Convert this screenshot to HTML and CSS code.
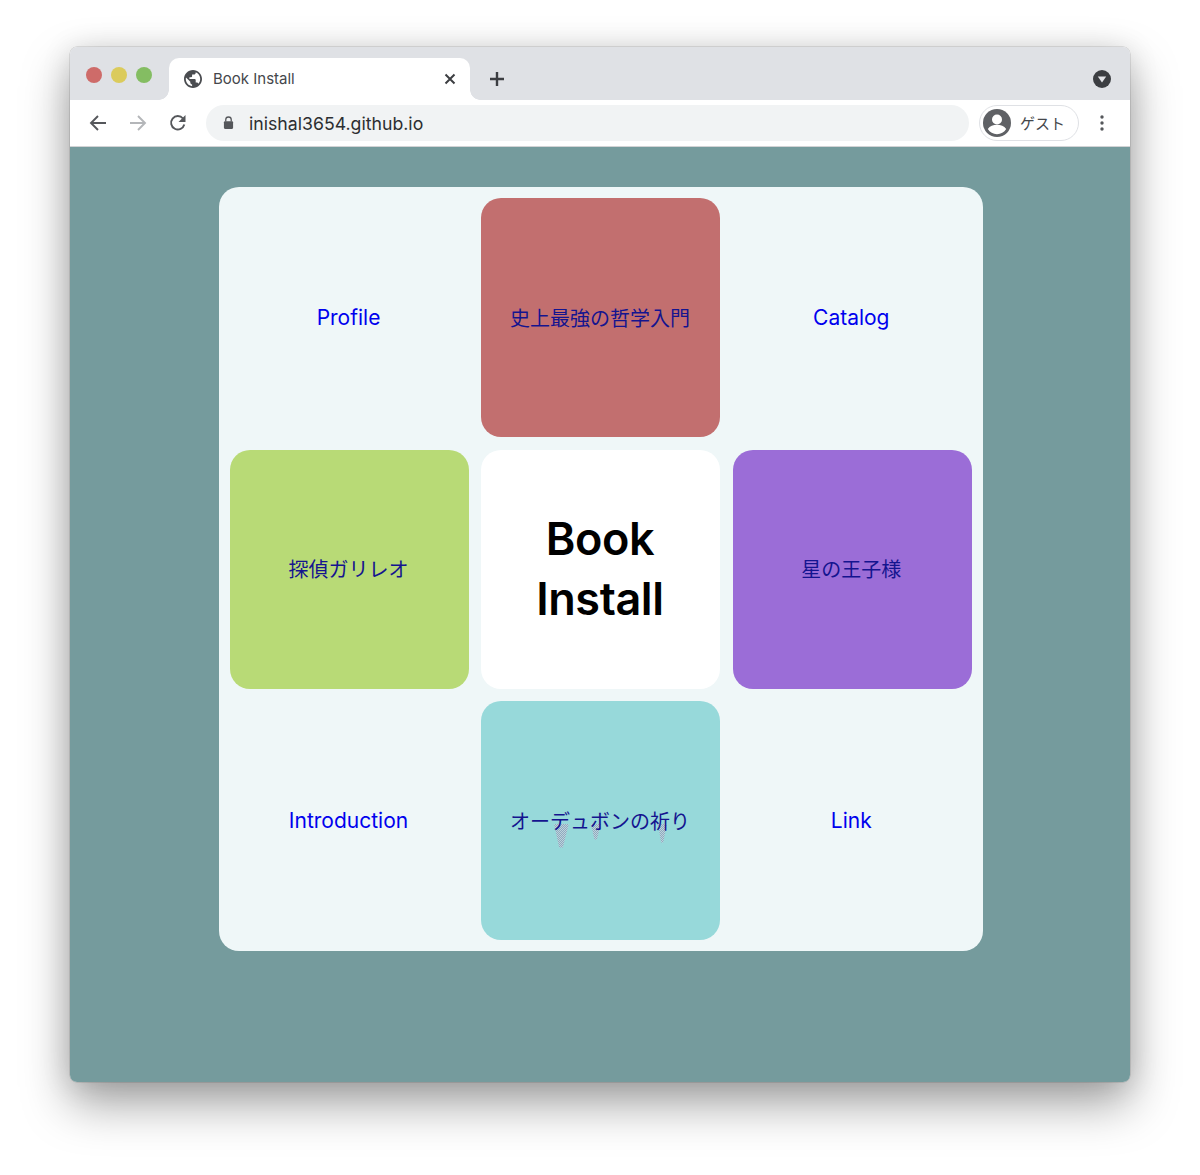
FILE: index.html
```html
<!DOCTYPE html>
<html lang="ja">
<head>
<meta charset="utf-8">
<title>Book Install</title>
<link rel="stylesheet" href="styles.css">
</head>
<body>
<div class="window">
  <div class="titlebar">
    <div class="lights">
      <span class="light red"></span><span class="light yellow"></span><span class="light green"></span>
    </div>
    <div class="tab">
      <svg class="globe" viewBox="2 2 20 20" width="18" height="18"><path fill-rule="evenodd" d="M12 2C6.480 2 2 6.480 2 12s4.480 10 10 10 10-4.480 10-10S17.520 2 12 2zm-1 17.930c-3.950-.490-7-3.850-7-7.930 0-.620.080-1.210.210-1.790L9 15v1c0 1.100.9 2 2 2v1.930zm6.900-2.540c-.260-.810-1-1.390-1.900-1.390h-1v-3c0-.550-.450-1-1-1H8v-2h2c.550 0 1-.450 1-1V7h2c1.100 0 2-.9 2-2v-.410c2.930 1.190 5 4.060 5 7.410 0 2.080-.8 3.970-2.100 5.390z" fill="#4a4c50"/></svg>
      <span class="tab-title">Book Install</span>
      <svg class="tab-close" viewBox="0 0 12 12" width="12" height="12"><path d="M1.500 1.500l9 9M10.500 1.500l-9 9" stroke="#3c3e42" stroke-width="2" fill="none"/></svg>
    </div>
    <svg class="newtab" viewBox="0 0 16 16" width="16" height="16"><path d="M8 1v14M1 8h14" stroke="#3c3e42" stroke-width="2.400" fill="none"/></svg>
    <svg class="menu-down" viewBox="0 0 18 18" width="18" height="18"><circle cx="9" cy="9" r="9" fill="#3c3e42"/><path d="M4.800 6.500h8.400L9 12.500z" fill="#e3e4e8"/></svg>
  </div>
  <div class="toolbar">
    <svg class="nav" viewBox="0 0 18 18" width="18" height="18"><path d="M17 9H2M9 2L2 9l7 7" stroke="#55575b" stroke-width="1.900" fill="none"/></svg>
    <svg class="nav" viewBox="0 0 18 18" width="18" height="18"><path d="M1 9h15M9 2l7 7-7 7" stroke="#b4b6b9" stroke-width="1.900" fill="none"/></svg>
    <svg class="nav" viewBox="0 0 18 18" width="18" height="18"><path d="M15.300 10.500A6.700 6.700 0 1 1 14 4.500" stroke="#55575b" stroke-width="1.900" fill="none"/><path d="M16.500 1v7h-7z" fill="#55575b"/></svg>
    <div class="omnibox">
      <svg class="lock" viewBox="0 0 12 14" width="11" height="13"><path d="M3 6V4a3 3 0 0 1 6 0v2" stroke="#55575b" stroke-width="1.400" fill="none"/><rect x="1" y="5.500" width="10" height="8.500" rx="1.200" fill="#55575b"/></svg>
      <span class="url">inishal3654.github.io</span>
    </div>
    <div class="profile">
      <svg viewBox="0 0 28 28" width="28" height="28"><circle cx="14" cy="14" r="14" fill="#5f6165"/><circle cx="14" cy="10.500" r="5" fill="#fff"/><path d="M4.800 20c2-3 5.500-4.200 9.200-4.200s7.200 1.200 9.200 4.200c-2 3.200-5.400 5.200-9.200 5.200s-7.200-2-9.200-5.200z" fill="#fff"/></svg>
      <span class="guest">ゲスト</span>
    </div>
    <svg class="dots" viewBox="0 0 4 16" width="4" height="16"><circle cx="2" cy="2" r="1.700" fill="#55575b"/><circle cx="2" cy="8" r="1.700" fill="#55575b"/><circle cx="2" cy="14" r="1.700" fill="#55575b"/></svg>
  </div>
  <main class="page">
    <div class="board">
      <a class="tile" href="#">Profile</a>
      <a class="tile rose" href="#">史上最強の哲学入門</a>
      <a class="tile" href="#">Catalog</a>
      <a class="tile lime" href="#">探偵ガリレオ</a>
      <div class="tile center"><h1>Book<br>Install</h1></div>
      <a class="tile violet" href="#">星の王子様</a>
      <a class="tile" href="#">Introduction</a>
      <a class="tile aqua" href="#"><span class="smudged">オーデュボンの祈り<i class="smudge s1"></i><i class="smudge s2"></i><i class="smudge s3"></i></span></a>
      <a class="tile" href="#">Link</a>
    </div>
  </main>
</div>
</body>
</html>
```
FILE: styles.css
```css
* { box-sizing: border-box; }
html, body { margin: 0; height: 100%; background: #fff; }
body {
  padding: 47px 70px 0;
  height: 1175px;
  overflow: hidden;
  font-family: "Inter", "Noto Sans CJK JP", sans-serif;
}
.window {
  width: 1060px;
  height: 1035px;
  display: flex;
  flex-direction: column;
  border-radius: 7px;
  box-shadow: 0 0 0 .5px rgba(0,0,0,.18), 0 22px 48px rgba(0,0,0,.36), 0 2px 30px rgba(0,0,0,.12);
}
.titlebar {
  height: 53px;
  flex: none;
  background: #dfe1e5;
  border-radius: 7px 7px 0 0;
  display: flex;
  align-items: flex-start;
  padding: 11px 19px 0 16px;
}
.lights { display: flex; gap: 9px; margin-top: 9px; width: 83px; flex: none; }
.light { width: 16px; height: 16px; border-radius: 50%; }
.red { background: #ce6b69; }
.yellow { background: #dbcb5c; }
.green { background: #84bd62; }
.tab {
  position: relative;
  width: 301px;
  height: 42px;
  flex: none;
  background: #fff;
  border-radius: 10px 10px 0 0;
  display: flex;
  align-items: center;
  padding: 0 14px 1px 15px;
  color: #45474b;
}
.tab::before, .tab::after {
  content: "";
  position: absolute;
  bottom: 0;
  width: 10px;
  height: 10px;
}
.tab::before { left: -10px; background: radial-gradient(circle at 0 0, #dfe1e5 9.500px, #fff 10px); }
.tab::after { right: -10px; background: radial-gradient(circle at 100% 0, #dfe1e5 9.500px, #fff 10px); }
.globe { flex: none; }
.tab-title { margin-left: 11px; font-size: 15px; flex: 1; }
.tab-close { flex: none; }
.newtab { flex: none; margin: 13px 0 0 19px; }
.menu-down { flex: none; margin: 12px 0 0 auto; }
.toolbar {
  height: 47px;
  flex: none;
  background: #fff;
  border-bottom: 1px solid #d2d3d5;
  display: flex;
  align-items: center;
  padding: 0 24px 1px 19px;
}
.nav { flex: none; margin-right: 22px; }
.omnibox {
  width: 763px;
  height: 36px;
  flex: none;
  margin-left: -3px;
  background: #f1f3f4;
  border-radius: 18px;
  display: flex;
  align-items: center;
  padding-left: 17px;
}
.url { margin-left: 15px; font-size: 17.700px; color: #2c2e31; padding-top: 1px; }
.profile {
  width: 100px;
  height: 36px;
  flex: none;
  margin-left: 10px;
  border: 1px solid #dfe1e5;
  border-radius: 18px;
  display: flex;
  align-items: center;
  padding-left: 3px;
}
.guest { margin-left: 9px; font-size: 15px; color: #45474b; }
.dots { flex: none; margin-left: 21px; }
.page {
  flex: 1;
  background: #759b9d;
  border-radius: 0 0 7px 7px;
  padding: 40px 0 0 149px;
}
.board {
  width: 764px;
  height: 764px;
  padding: 11px;
  background: #eff7f8;
  border-radius: 20px;
  display: grid;
  grid-template-columns: repeat(3, 239px);
  grid-template-rows: repeat(3, 239px);
  gap: 12.500px 12.400px;
}
.tile {
  display: flex;
  align-items: center;
  justify-content: center;
  padding-right: 2px;
  border-radius: 20px;
  color: #0000ee;
  font-size: 21px;
  text-decoration: none;
  text-align: center;
}
.rose, .lime, .violet, .aqua { color: #14148f; font-size: 20px; padding-bottom: 1px; }
.rose { background: #c26f6f; }
.lime { background: #b8da76; }
.violet { background: #9b6dd7; }
.aqua { background: #97d9da; }
.center { background: #fff; }
.center h1 {
  margin: 0;
  font-size: 45px;
  line-height: 60px;
  font-weight: 600;
  letter-spacing: -.4px;
  color: #000;
}
.smudged { position: relative; isolation: isolate; }
.smudge {
  position: absolute;
  z-index: -1;
  background: repeating-conic-gradient(#8fa8c0 0 25%, #bcd4da 0 50%) 0 0 / 2px 2px;
  clip-path: polygon(0 0, 100% 0, 60% 100%, 35% 100%);
}
.s1 { left: 44px; top: 18px; width: 15px; height: 24px; }
.s2 { left: 81px; top: 18px; width: 10px; height: 16px; }
.s3 { left: 148px; top: 18px; width: 9px; height: 19px; }
```
